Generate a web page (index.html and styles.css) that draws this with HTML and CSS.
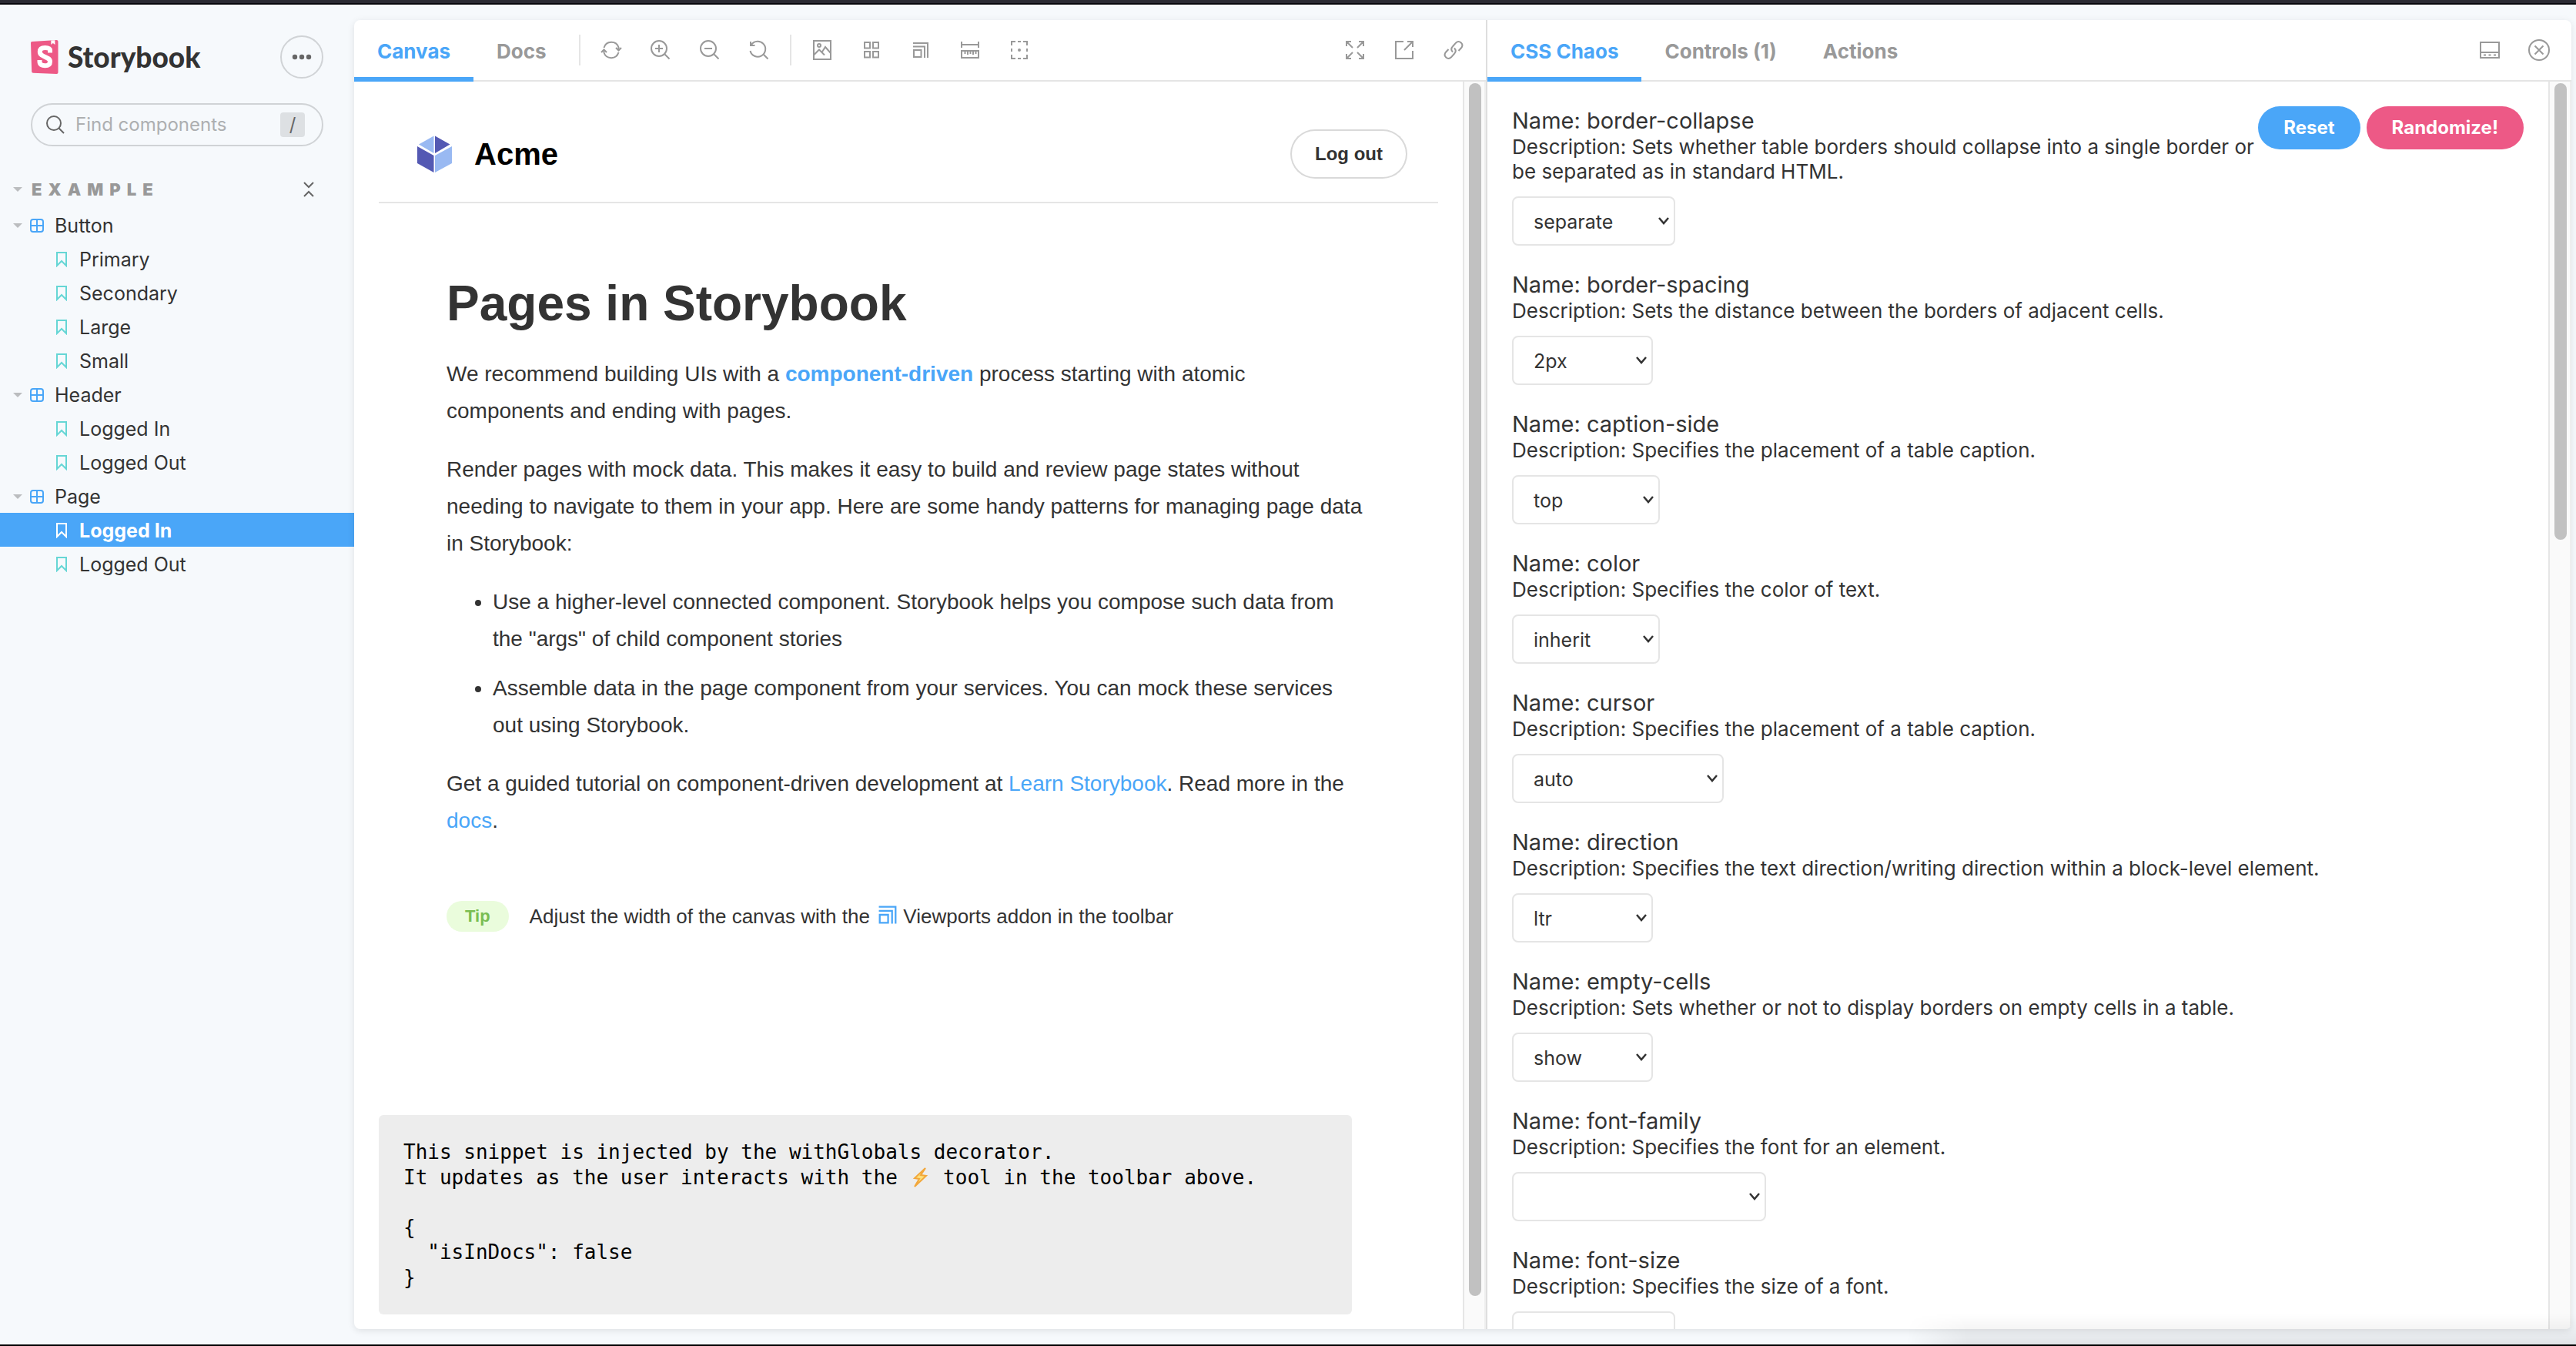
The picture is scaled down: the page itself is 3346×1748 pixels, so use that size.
FILE: index.html
```html
<!DOCTYPE html>
<html lang="en">
<head>
<meta charset="utf-8">
<title>Page - Logged In ⋅ Storybook</title>
<link rel="stylesheet" href="styles.css">
</head>
<body>
<svg class="sprite" aria-hidden="true">
  <symbol id="i-component" viewBox="0 0 18 18"><rect x="1" y="1" width="16" height="16" rx="3"/><path d="M9 1v16M1 9h16"/></symbol>
  <symbol id="i-bookmark" viewBox="0 0 14 20"><path d="M1 1h12v17l-6-6-6 6z"/></symbol>
  <symbol id="i-viewport" viewBox="0 0 28 28"><path d="M4 5h19v19M4 9.500h15V24M5 14h9.500v9H5z"/></symbol>
</svg>
<div class="titlebar"></div>
<div class="app">
  <nav class="sidebar" aria-label="Stories">
    <div class="brand">
      <a class="logo" href="#">
        <svg class="logo-mark" viewBox="0 0 36 44"><path class="pink" d="M0 3.500Q0 2 1.500 1.900L33.500 0Q35.500 0 35.500 2V42Q35.500 44 33.500 44L3 42.700Q1.300 42.500 1.200 41z"/><path class="white" d="M26.300.5l5-.3.2 5.900-2.700-2-2.400 1.800z"/><path class="s-curve" d="M25 16.500v-3c0-3-3-3.600-6.500-3.600-4 0-6.700 1.600-6.700 5.300 0 7.500 13.200 6 13.200 12.700 0 3.800-2.700 5.300-6.500 5.300-4.200 0-7-1.500-7-5.200v-2"/></svg>
        <span>Storybook</span>
      </a>
      <button class="menu-button" type="button" aria-label="Shortcuts"><svg viewBox="0 0 28 8"><circle cx="5" cy="4" r="3.200"/><circle cx="14" cy="4" r="3.200"/><circle cx="23" cy="4" r="3.200"/></svg></button>
    </div>
    <div class="search">
      <svg class="search-icon" viewBox="0 0 24 24"><circle cx="10" cy="10" r="9"/><path d="M16.500 16.500L23 23"/></svg>
      <input type="search" placeholder="Find components" aria-label="Find components">
      <kbd>/</kbd>
    </div>
    <div class="group-heading">
      <button class="group-toggle" type="button"><i class="caret"></i>EXAMPLE</button>
      <button class="collapse" type="button" aria-label="Collapse all"><svg viewBox="0 0 14 20"><path d="M1 1l6 6 6-6M1 19l6-6 6 6"/></svg></button>
    </div>
    <ul class="tree">
      <li><a class="row component" href="#"><i class="caret"></i><svg><use href="#i-component"/></svg>Button</a></li>
      <li><a class="row story" href="#"><svg><use href="#i-bookmark"/></svg>Primary</a></li>
      <li><a class="row story" href="#"><svg><use href="#i-bookmark"/></svg>Secondary</a></li>
      <li><a class="row story" href="#"><svg><use href="#i-bookmark"/></svg>Large</a></li>
      <li><a class="row story" href="#"><svg><use href="#i-bookmark"/></svg>Small</a></li>
      <li><a class="row component" href="#"><i class="caret"></i><svg><use href="#i-component"/></svg>Header</a></li>
      <li><a class="row story" href="#"><svg><use href="#i-bookmark"/></svg>Logged In</a></li>
      <li><a class="row story" href="#"><svg><use href="#i-bookmark"/></svg>Logged Out</a></li>
      <li><a class="row component" href="#"><i class="caret"></i><svg><use href="#i-component"/></svg>Page</a></li>
      <li><a class="row story selected" href="#" aria-current="page"><svg><use href="#i-bookmark"/></svg>Logged In</a></li>
      <li><a class="row story" href="#"><svg><use href="#i-bookmark"/></svg>Logged Out</a></li>
    </ul>
  </nav>

  <div class="panels">
    <main class="panel preview">
      <div class="bar">
        <button class="tab active" type="button">Canvas</button>
        <button class="tab" type="button">Docs</button>
        <span class="separator"></span>
        <button class="tool" type="button" aria-label="Remount component"><svg viewBox="0 0 28 28"><path d="M4.500 11a10 10 0 0 1 19-.5V13M23.500 17a10 10 0 0 1-19 .5V15"/><path d="M20 11l3.500 3.500L27 11M1 17l3.500-3.500L8 17"/></svg></button>
        <button class="tool" type="button" aria-label="Zoom in"><svg viewBox="0 0 28 28"><circle cx="12" cy="12" r="10"/><path d="M19.500 19.500l6 6M12 7v10M7 12h10"/></svg></button>
        <button class="tool" type="button" aria-label="Zoom out"><svg viewBox="0 0 28 28"><circle cx="12" cy="12" r="10"/><path d="M19.500 19.500l6 6M7 12h10"/></svg></button>
        <button class="tool" type="button" aria-label="Reset zoom"><svg viewBox="0 0 28 28"><path d="M4 7a10 10 0 1 1-1.500 8M19.500 19.500l6 6M3 3v5h5.500"/></svg></button>
        <span class="separator"></span>
        <button class="tool" type="button" aria-label="Background"><svg viewBox="0 0 28 28"><path d="M3 2h22v24H3zM3 20.500l7-7 7 7M13.500 17l4.500-7 7 8"/><circle cx="10" cy="8" r="2"/></svg></button>
        <button class="tool" type="button" aria-label="Grid"><svg viewBox="0 0 28 28"><path d="M5 4h7v7.500H5zM16 4h7v7.500h-7zM5 16h7v7.500H5zM16 16h7v7.500h-7z"/></svg></button>
        <button class="tool" type="button" aria-label="Viewport"><svg><use href="#i-viewport"/></svg></button>
        <button class="tool" type="button" aria-label="Measure"><svg viewBox="0 0 28 28"><path d="M3 3v8M25 3v8M3 7h22M3 15h22v9H3zM7.500 15v4M11 15v5M14.500 15v4M18 15v5M21.500 15v4"/></svg></button>
        <button class="tool" type="button" aria-label="Outline"><svg viewBox="0 0 28 28"><path d="M4 8V3h5M12 3h4M19 3h5v5M24 12v4M24 20v5h-5M16 25h-4M9 25H4v-5M4 16v-4"/><circle cx="14" cy="14" r="1"/></svg></button>
        <span class="spacer"></span>
        <button class="tool" type="button" aria-label="Full screen"><svg viewBox="0 0 28 28"><path d="M3 9V3h6M3 3l8 8M19 3h6v6M25 3l-8 8M3 19v6h6M3 25l8-8M25 19v6h-6M25 25l-8-8"/></svg></button>
        <a class="tool" href="#" aria-label="Open in new tab"><svg viewBox="0 0 28 28"><path d="M13 3H3v22h22V15M18 3h7v7M25 3L14 14"/></svg></a>
        <button class="tool" type="button" aria-label="Copy link"><svg viewBox="0 0 28 28"><path d="M13 16.500c-2.200-2.200-2.200-5 0-7.300l4-4.500c2-2 4.800-2 6.800-.2s2 4.500.2 6.800L20.500 15M15 11.500c2.200 2.200 2.200 5 0 7.300l-4 4.500c-2 2-4.800 2-6.800.2s-2-4.500-.2-6.800L7.500 13"/></svg></button>
      </div>
      <div class="frame">
        <div class="canvas">
          <header class="site-header">
            <div class="site-brand">
              <svg viewBox="0 0 64 64"><path fill="#99b9f2" d="M31.500 8.500V31L12 19.500zM55 22v22L33 56V34z"/><path fill="#5459b3" d="M33 8.500V31l19.500-11.500zM10 22v22l21.500 12V34z"/></svg>
              <span>Acme</span>
            </div>
            <button class="logout" type="button">Log out</button>
          </header>
          <section class="article">
            <h1>Pages in Storybook</h1>
            <p>We recommend building UIs with a <a href="#"><strong>component-driven</strong></a> process starting with atomic components and ending with pages.</p>
            <p>Render pages with mock data. This makes it easy to build and review page states without needing to navigate to them in your app. Here are some handy patterns for managing page data in Storybook:</p>
            <ul>
              <li>Use a higher-level connected component. Storybook helps you compose such data from the "args" of child component stories</li>
              <li>Assemble data in the page component from your services. You can mock these services out using Storybook.</li>
            </ul>
            <p>Get a guided tutorial on component-driven development at <a href="#">Learn Storybook</a>. Read more in the <a href="#">docs</a>.</p>
            <div class="tip-line"><span class="tip">Tip</span> <span>Adjust the width of the canvas with the <svg><use href="#i-viewport"/></svg> Viewports addon in the toolbar</span></div>
          </section>
          <pre class="snippet">This snippet is injected by the withGlobals decorator.
It updates as the user interacts with the <svg viewBox="0 0 28 26" role="img" aria-label="lightning"><path d="M21 1L7 14l6 1-6 10 15-14-7-1z"/></svg> tool in the toolbar above.

{
  "isInDocs": false
}</pre>
        </div>
        <div class="scrollbar"><div class="thumb long"></div></div>
      </div>
    </main>

    <aside class="panel addons">
      <div class="bar">
        <button class="tab active" type="button">CSS Chaos</button>
        <button class="tab" type="button">Controls (1)</button>
        <button class="tab" type="button">Actions</button>
        <span class="spacer"></span>
        <button class="tool" type="button" aria-label="Change orientation"><svg viewBox="0 0 28 28"><path d="M2 4h24v20H2zM2 17h24M6 20.500h3M12.500 20.500h3M19 20.500h3"/></svg></button>
        <button class="tool" type="button" aria-label="Hide addons"><svg viewBox="0 0 28 28"><circle cx="14" cy="14" r="13"/><path d="M8.500 8.500l11 11M19.500 8.500l-11 11"/></svg></button>
      </div>
      <div class="frame">
        <form class="chaos">
          <div class="actions"><button class="pill blue" type="button">Reset</button><button class="pill rose" type="button">Randomize!</button></div>
          <div class="field"><label for="f1">Name: border-collapse</label><p>Description: Sets whether table borders should collapse into a single border or be separated as in standard HTML.</p><select id="f1" class="w-m"><option>separate</option></select></div>
          <div class="field"><label for="f2">Name: border-spacing</label><p>Description: Sets the distance between the borders of adjacent cells.</p><select id="f2" class="w-s"><option>2px</option></select></div>
          <div class="field"><label for="f3">Name: caption-side</label><p>Description: Specifies the placement of a table caption.</p><select id="f3" class="w-sm"><option>top</option></select></div>
          <div class="field"><label for="f4">Name: color</label><p>Description: Specifies the color of text.</p><select id="f4" class="w-sm"><option>inherit</option></select></div>
          <div class="field"><label for="f5">Name: cursor</label><p>Description: Specifies the placement of a table caption.</p><select id="f5" class="w-l"><option>auto</option></select></div>
          <div class="field"><label for="f6">Name: direction</label><p>Description: Specifies the text direction/writing direction within a block-level element.</p><select id="f6" class="w-s"><option>ltr</option></select></div>
          <div class="field"><label for="f7">Name: empty-cells</label><p>Description: Sets whether or not to display borders on empty cells in a table.</p><select id="f7" class="w-s"><option>show</option></select></div>
          <div class="field"><label for="f8">Name: font-family</label><p>Description: Specifies the font for an element.</p><select id="f8" class="w-xl"><option></option></select></div>
          <div class="field"><label for="f9">Name: font-size</label><p>Description: Specifies the size of a font.</p><select id="f9" class="w-m"><option>small</option></select></div>
        </form>
        <div class="scrollbar"><div class="thumb short"></div></div>
      </div>
    </aside>
  </div>
</div>
</body>
</html>
```
FILE: styles.css
```css
* { box-sizing: border-box; }

body {
  margin: 0;
  height: 100vh;
  display: flex;
  flex-direction: column;
  overflow: hidden;
  background: #f6f9fc;
  border-bottom: 2px solid #000;
  color: #333;
  font: 26px/32px Inter, "Liberation Sans", sans-serif;
}

button, input, select { font: inherit; color: inherit; }
button { border: 0; background: none; padding: 0; cursor: pointer; }
a { color: #4aa6f8; text-decoration: none; }
p, ul { margin: 0; padding: 0; }
svg { fill: none; stroke: currentColor; stroke-width: 2; flex: none; }
.sprite { position: absolute; width: 0; height: 0; }

.titlebar { height: 6px; flex: none; background: #2b2a33; border-bottom: 2px solid #08070c; }
.app { flex: 1; min-height: 0; display: flex; position: relative; }

/* Soft shade along the bottom right edge of the window */
.app::after {
  content: ""; position: absolute; right: 0; bottom: 0; width: 26%; height: 40px; pointer-events: none;
  background: linear-gradient(to bottom, transparent, rgba(0, 0, 0, .08));
  mask-image: linear-gradient(to right, transparent, #000 80px);
}

/* Sidebar */
.sidebar { width: 460px; flex: none; padding-top: 40px; }
.brand { display: flex; align-items: center; justify-content: space-between; padding: 0 40px; height: 56px; }
.logo { display: flex; align-items: center; gap: 12px; color: #333; font: 900 37px/44px Lato, sans-serif; }
.logo-mark { width: 36px; height: 44px; stroke: none; }
.logo-mark .pink { fill: #ed5986; }
.logo-mark .white { fill: #fff; }
.logo-mark .s-curve { stroke: #fff; stroke-width: 6; }
.menu-button {
  width: 56px; height: 56px;
  border: 2px solid #d0d3d6; border-radius: 50%;
  display: grid; place-items: center; color: #666;
}
.menu-button svg { width: 28px; height: 8px; fill: currentColor; stroke: none; }

.search {
  display: flex; align-items: center;
  margin: 32px 40px 0; height: 56px; padding: 0 22px 0 18px;
  border: 2px solid #d0d3d6; border-radius: 28px;
}
.search-icon { width: 24px; height: 24px; color: #666; }
.search input { flex: 1; min-width: 0; margin-left: 14px; padding: 0; border: 0; background: none; outline: 0; font-size: 24px; }
.search input::placeholder { color: #adafb1; }
.search kbd { width: 32px; height: 32px; border-radius: 4px; background: #dde0e3; color: #666; font: 24px/32px Inter, sans-serif; text-align: center; }

.caret { width: 12px; height: 6px; background: #bbbdbf; clip-path: polygon(0 0, 100% 0, 50% 100%); flex: none; }
.group-heading { display: flex; align-items: center; justify-content: space-between; height: 40px; margin-top: 36px; padding: 0 52px 0 17px; }
.group-toggle { display: flex; align-items: center; gap: 12px; color: #999; font-size: 22px; font-weight: 900; letter-spacing: 8px; }
.collapse { display: flex; color: #666; }
.collapse svg { width: 14px; height: 20px; }

.tree { list-style: none; margin-top: 4px; }
.row { display: flex; align-items: center; height: 44px; padding-top: 2px; color: #333; font-size: 25px; }
.row.component { padding-left: 17px; }
.row.component svg { width: 18px; height: 18px; margin: 0 14px 0 10px; color: #4aa6f8; }
.row.story { padding-left: 73px; }
.row.story svg { width: 14px; height: 20px; margin-right: 16px; color: #66d6d5; }
.row.selected { background: #4aa6f8; color: #fff; font-weight: 700; }
.row.story.selected svg { color: #fff; }

/* Panels */
.panels {
  flex: 1; min-width: 0; display: grid; grid-template-columns: 1472fr 1408fr;
  margin: 20px 6px 20px 0; background: #fff; border-radius: 8px;
  box-shadow: 0 2px 10px rgba(0, 0, 0, .1);
  overflow: hidden;
}
.panel { display: flex; flex-direction: column; min-width: 0; min-height: 0; }
.preview { border-right: 2px solid #dedede; }
.bar { display: flex; align-items: center; height: 80px; flex: none; padding-right: 14px; border-bottom: 2px solid #e5e5e5; color: #999; }
.tab { height: 80px; margin-bottom: -2px; padding: 8px 30px 0; border-bottom: 6px solid transparent; color: #999; font-size: 26px; font-weight: 700; white-space: nowrap; }
.tab.active { color: #4aa6f8; border-color: #4aa6f8; }
.separator { width: 2px; height: 40px; margin: 0 12px; background: #e5e5e5; }
.tool { width: 56px; display: flex; justify-content: center; color: #999; }
.tool + .tool { margin-left: 8px; }
.tool svg { width: 28px; height: 28px; }
.spacer { flex: 1; }
.frame { flex: 1; min-height: 0; display: flex; overflow: hidden; }
.scrollbar { width: 30px; flex: none; padding: 2px 0 0 6px; background: #fafafa; border-left: 2px solid #e6e6e6; border-right: 2px solid #eee; }
.thumb { width: 16px; border-radius: 8px; background: #c1c1c1; }
.thumb.long { height: calc(100% - 43px); }
.thumb.short { height: 593px; }

/* Story canvas */
.canvas { flex: 1; min-width: 0; padding: 32px; font-family: "Liberation Sans", Arial, sans-serif; }
.site-header { display: flex; align-items: center; justify-content: space-between; padding: 30px 40px; border-bottom: 2px solid #e5e5e5; }
.site-brand { display: flex; align-items: center; gap: 20px; color: #000; font-size: 40px; font-weight: 700; }
.site-brand svg { width: 64px; height: 64px; stroke: none; }
.logout { height: 64px; padding: 0 32px; border-radius: 32px; box-shadow: inset 0 0 0 2px #d9d9d9; font-size: 24px; font-weight: 700; }
.article { max-width: 1280px; margin: 0 auto; padding: 98px 44px 94px 40px; font-size: 28px; line-height: 48px; }
.article h1 { margin: 0 0 36px; font-size: 64px; line-height: 64px; }
.article p, .article ul { margin-bottom: 28px; }
.article ul { padding-left: 60px; }
.article li + li { margin-top: 16px; }
.tip-line { display: flex; align-items: center; gap: 27px; margin: 80px 0; font-size: 26px; line-height: 40px; }
.tip { padding: 8px 24px; border-radius: 20px; background: #eafcdc; color: #79bd52; font-size: 22px; font-weight: 700; line-height: 24px; }
.tip-line svg { width: 32px; height: 32px; margin: 2px -3px 0 0; vertical-align: top; color: #4aa6f8; }
.snippet { max-width: 1264px; margin: 64px 0 0; padding: 32px; border-radius: 6px; background: #ededed; color: #000; font: 26px/1.25 "DejaVu Sans Mono", monospace; }
.snippet svg { width: 28px; height: 26px; vertical-align: -4px; fill: #fde07a; stroke: #f2a73b; }

/* CSS Chaos panel */
.chaos { flex: 1; min-width: 0; padding: 32px; }
.actions { float: right; display: flex; gap: 8px; }
.pill { height: 56px; padding: 0 33px; border-radius: 28px; color: #fff; font-size: 24px; font-weight: 700; }
.blue { background: #4aa6f8; }
.rose { background: #ed5986; }
.field { margin-bottom: 32px; }
.field label { display: block; font-size: 29px; line-height: 37px; }
.field p { font-size: 26px; }
.field select {
  appearance: none; display: block; height: 64px; margin-top: 16px; padding: 2px 26px 0;
  border: 2px solid #e5e5e5; border-radius: 8px;
  background: #fff url("data:image/svg+xml,%3Csvg xmlns='http://www.w3.org/2000/svg' viewBox='0 0 14 10'%3E%3Cpath d='M1 1l6 7 6-7' fill='none' stroke='%23333' stroke-width='2.500'/%3E%3C/svg%3E") right 6px center / 14px 10px no-repeat;
  font-size: 25px;
}
.w-s { width: 183px; }
.w-sm { width: 192px; }
.w-m { width: 212px; }
.w-l { width: 275px; }
.w-xl { width: 330px; }
```
